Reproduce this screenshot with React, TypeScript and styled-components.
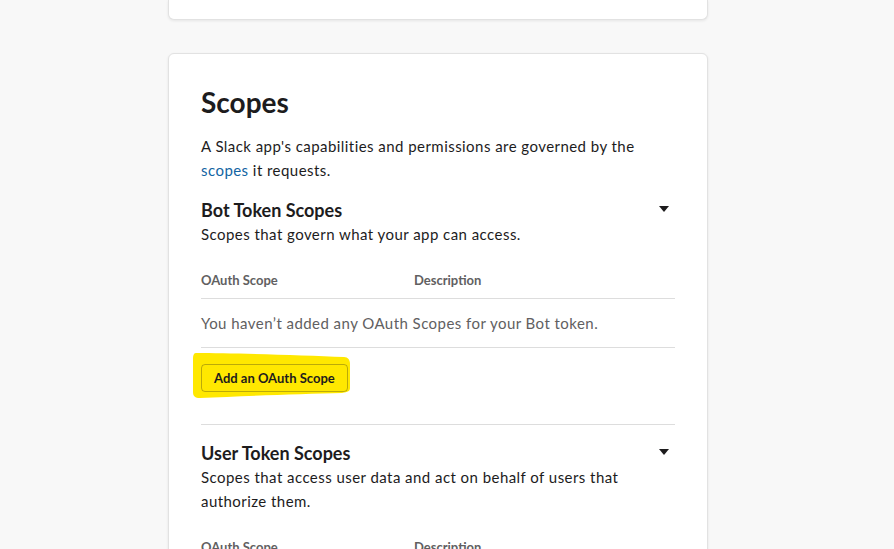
import React from 'react';
import styled, { createGlobalStyle } from 'styled-components';

const GlobalStyle = createGlobalStyle`
  html, body {
    margin: 0;
    padding: 0;
    background: #f8f8f8;
    overflow: hidden;
  }
  body {
    font-family: Lato, "Noto Sans", "Liberation Sans", sans-serif;
    color: #1d1c1d;
    -webkit-font-smoothing: antialiased;
  }
`;

type Section = {
  title: string;
  lines: string;
  empty: string;
};

const sections: Section[] = [
  {
    title: 'Bot Token Scopes',
    lines: 'Scopes that govern what your app can access.',
    empty: 'You haven’t added any OAuth Scopes for your Bot token.',
  },
  {
    title: 'User Token Scopes',
    lines: 'Scopes that access user data and act on behalf of users that authorize them.',
    empty: 'You haven’t added any OAuth Scopes for your User token.',
  },
];

const Caret = () => (
  <svg width="10" height="6" viewBox="0 0 10 6" aria-hidden="true">
    <path d="M0 0h10L5 6z" fill="#1d1c1d" />
  </svg>
);

// hand-drawn highlighter stroke behind the button
const Marker = () => (
  <svg width="160" height="48" viewBox="0 0 160 48" aria-hidden="true">
    <path
      d="M4 1 C40 1 110 3 152 5 C156 5 158 8 158 12 L158 36 C158 39 156 40 150 41 C110 42 50 44 8 46 C3 46 1 44 1 40 L1 6 C1 3 2 1 4 1 Z"
      fill="#ffe800"
    />
  </svg>
);

export default function App() {
  return (
    <Page>
      <GlobalStyle />
      <CardStub />
      <Card>
        <Title>Scopes</Title>
        <Intro>
          A Slack app's capabilities and permissions are governed by the <Link>scopes</Link> it requests.
        </Intro>
        {sections.map((s, i) => (
          <ScopeSection key={s.title} $first={i === 0}>
            <SectionHead>
              <SectionTitle>{s.title}</SectionTitle>
              <CaretButton>
                <Caret />
              </CaretButton>
            </SectionHead>
            <SectionText>{s.lines}</SectionText>
            <Table>
              <HeadCell>OAuth Scope</HeadCell>
              <HeadCell>Description</HeadCell>
              <EmptyRow>{s.empty}</EmptyRow>
            </Table>
            <ButtonWrap>
              <MarkerLayer>
                <Marker />
              </MarkerLayer>
              <OutlineButton>Add an OAuth Scope</OutlineButton>
            </ButtonWrap>
          </ScopeSection>
        ))}
      </Card>
    </Page>
  );
}

const Page = styled.div`
  display: flex;
  flex-direction: column;
  gap: 33px;
  width: 540px;
  margin-left: 168px;
`;

const CardStub = styled.div`
  height: 19px;
  background: #fff;
  border: 1px solid #e2e2e2;
  border-top: none;
  border-radius: 0 0 6px 6px;
  box-shadow: 0 1px 3px rgba(0, 0, 0, 0.08);
`;

const Card = styled.section`
  background: #fff;
  border: 1px solid #e2e2e2;
  border-radius: 6px;
  box-shadow: 0 1px 3px rgba(0, 0, 0, 0.08);
  padding: 30px 32px 40px;
`;

const Title = styled.h2`
  margin: 0;
  font-size: 28px;
  line-height: 36px;
  font-weight: 700;
`;

const BodyText = styled.p`
  margin: 0;
  font-size: 15px;
  line-height: 24px;
  letter-spacing: 0.45px;
`;

const Intro = styled(BodyText)`
  margin-top: 14px;
`;

const Link = styled.a`
  color: #1264a3;
  text-decoration: none;
`;

const ScopeSection = styled.div<{ $first: boolean }>`
  margin-top: ${p => (p.$first ? '16px' : '0')};
  padding-top: ${p => (p.$first ? '0' : '16px')};
  padding-bottom: 32px;
  border-top: ${p => (p.$first ? 'none' : '1px solid #dddddd')};
`;

const SectionHead = styled.div`
  display: flex;
  align-items: center;
  justify-content: space-between;
`;

const SectionTitle = styled.h3`
  margin: 0;
  font-size: 18px;
  line-height: 24px;
  font-weight: 700;
`;

const CaretButton = styled.span`
  display: flex;
  padding-right: 6px;
  margin-top: -2px;
`;

const SectionText = styled(BodyText)``;

const Table = styled.div`
  display: grid;
  grid-template-columns: 213px 1fr;
  margin-top: 24px;
`;

const HeadCell = styled.div`
  font-size: 13px;
  line-height: 20px;
  font-weight: 700;
  color: #616061;
  padding-bottom: 8px;
  border-bottom: 1px solid #dddddd;
`;

const EmptyRow = styled(BodyText)`
  grid-column: 1 / -1;
  padding: 12px 0;
  color: #616061;
  border-bottom: 1px solid #dddddd;
`;

const ButtonWrap = styled.div`
  position: relative;
  display: inline-flex;
  margin-top: 16px;
`;

const MarkerLayer = styled.div`
  position: absolute;
  left: -9px;
  top: -12px;
  line-height: 0;
`;

const OutlineButton = styled.button`
  position: relative;
  height: 28px;
  padding: 0 12px;
  font-family: inherit;
  font-size: 13px;
  font-weight: 700;
  color: #1d1c1d;
  background: transparent;
  border: 1px solid rgba(29, 28, 29, 0.3);
  border-radius: 4px;
  cursor: pointer;
`;
